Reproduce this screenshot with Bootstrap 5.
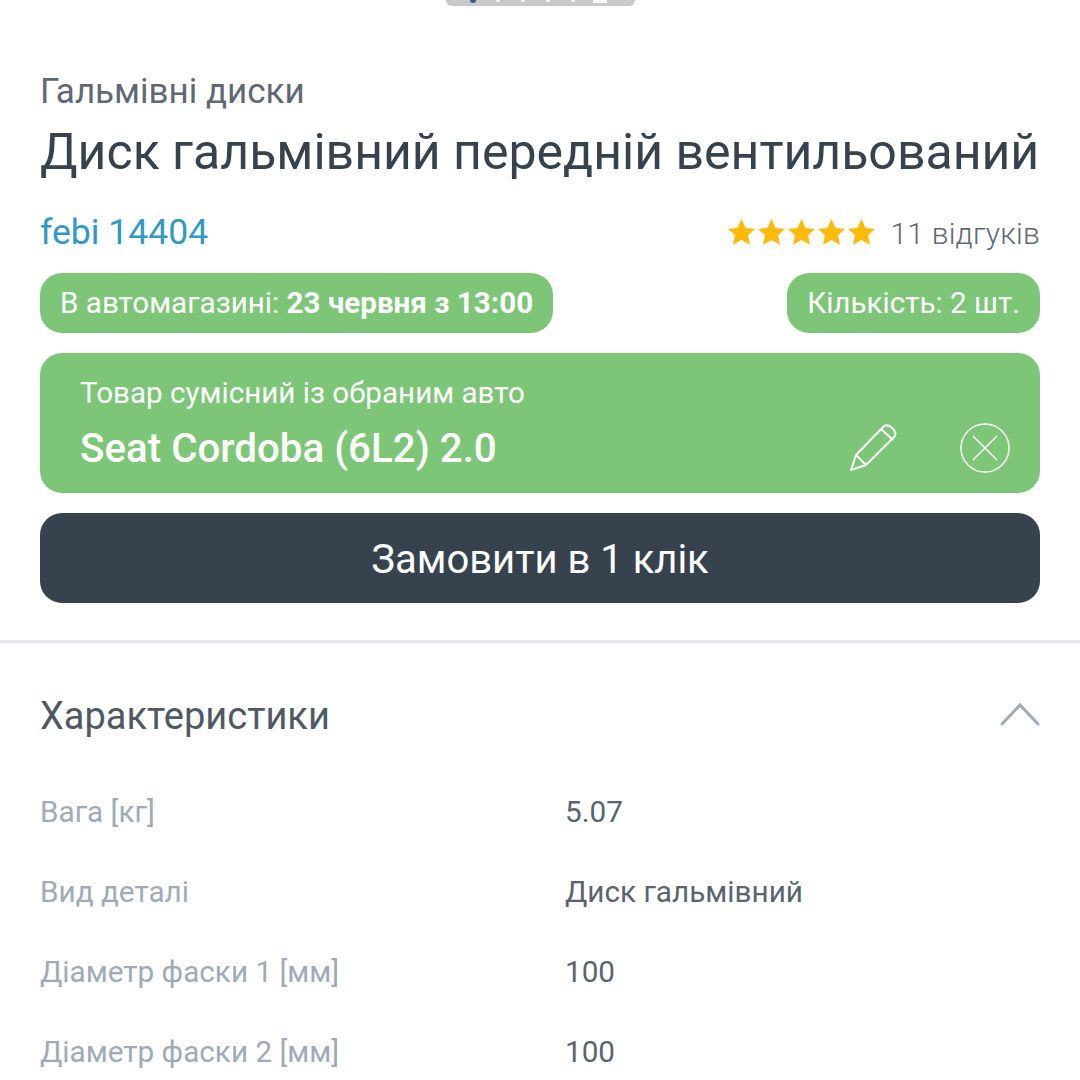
<!DOCTYPE html>
<html lang="uk">

<head>
    <meta charset="UTF-8">
    <meta name="viewport" content="width=device-width, initial-scale=1.0">
    <title>Диск гальмівний передній вентильований</title>
    <link href="https://cdn.jsdelivr.net/npm/bootstrap@5.3.0/dist/css/bootstrap.min.css" rel="stylesheet">
    <style>
        html, body {
            height: 1080px;
            overflow: hidden;
        }

        body {
            background-color: #fff;
            font-family: Roboto, "Liberation Sans", sans-serif;
            color: #37424f;
        }

        .top-handle {
            position: absolute;
            top: 0;
            left: 446px;
            width: 189px;
            height: 6px;
            background: #c8c8c8;
            border-radius: 0 0 8px 8px;
        }

        .top-handle svg {
            display: block;
        }

        .product-head {
            padding: 71px 40px 37px;
            border-bottom: 3px solid #e6e8ee;
        }

        .category-name {
            font-size: 35px;
            line-height: 42px;
            color: #5f6873;
        }

        .product-title {
            font-size: 50px;
            line-height: 60px;
            font-weight: 400;
            margin: 9px 0 0;
            white-space: nowrap;
        }

        .brand-row {
            margin-top: 29px;
            height: 44px;
        }

        .brand-link {
            font-size: 35.6px;
            color: #3398c4;
            text-decoration: none;
        }

        .review-count {
            font-size: 30px;
            font-weight: 300;
            color: #5f6873;
            letter-spacing: .2px;
            margin-left: 15px;
        }

        .status-row {
            margin-top: 18px;
        }

        .green-pill {
            background: #7dc678;
            color: #fff;
            height: 60px;
            line-height: 60px;
            padding: 0 20px;
            border-radius: 22px;
            font-size: 29.6px;
            white-space: nowrap;
        }

        .car-box {
            background: #7dc678;
            color: #fff;
            height: 140px;
            margin-top: 20px;
            padding: 0 30px 0 40px;
            border-radius: 22px;
        }

        .car-label {
            font-size: 29.6px;
            line-height: 36px;
        }

        .car-name {
            font-size: 40.3px;
            line-height: 46px;
            font-weight: 500;
            margin-top: 15px;
        }

        .car-actions {
            gap: 62px;
            margin-bottom: 20px;
        }

        .order-btn {
            display: block;
            width: 100%;
            height: 90px;
            margin-top: 20px;
            padding-top: 10px;
            background: #37424f;
            color: #fff;
            border: 0;
            border-radius: 22px;
            font-size: 40px;
        }

        .order-btn:hover {
            background: #37424f;
            color: #fff;
        }

        .specs {
            padding: 48px 40px 0;
        }

        .specs-title {
            font-size: 38px;
            line-height: 50px;
            font-weight: 400;
            color: #4f5965;
            margin: 0;
        }

        .specs-toggle {
            margin-bottom: 5px;
        }

        .spec-list {
            margin-top: 31px;
        }

        .spec-row {
            height: 80px;
            align-items: center;
            font-size: 29.7px;
        }

        .spec-name {
            width: 525px;
            color: #a0aab8;
        }

        .spec-value {
            color: #5a6470;
        }
    </style>
</head>

<body>
    <div class="top-handle">
        <svg width="189" height="6" viewBox="0 0 189 6">
            <circle cx="27" cy="0" r="3" fill="#3f5a86"/>
            <g fill="#fff">
                <circle cx="52" cy="0" r="2"/>
                <circle cx="77" cy="0" r="2"/>
                <circle cx="102" cy="0" r="2"/>
                <circle cx="127" cy="0" r="2"/>
                <rect x="147" y="0" width="14" height="3"/>
            </g>
        </svg>
    </div>

    <div class="product-head">
        <div class="category-name">Гальмівні диски</div>
        <h1 class="product-title">Диск гальмівний передній вентильований</h1>

        <div class="brand-row d-flex justify-content-between align-items-center">
            <a class="brand-link" href="#">febi 14404</a>
            <div class="d-flex align-items-center">
                <svg width="147" height="28" viewBox="0 0 147 28" fill="#ffb907">
                    <path id="star" d="M13.5 0l4.100 8.900 9.400 1-7 6.400 2 9.500-8.500-4.900-8.500 4.900 2-9.500-7-6.400 9.400-1z"/>
                    <use href="#star" x="30"/>
                    <use href="#star" x="60"/>
                    <use href="#star" x="90"/>
                    <use href="#star" x="120"/>
                </svg>
                <span class="review-count">11 відгуків</span>
            </div>
        </div>

        <div class="status-row d-flex justify-content-between">
            <div class="green-pill">В автомагазині: <b>23 червня з 13:00</b></div>
            <div class="green-pill">Кількість: 2 шт.</div>
        </div>

        <div class="car-box d-flex justify-content-between align-items-center">
            <div>
                <div class="car-label">Товар сумісний із обраним авто</div>
                <div class="car-name">Seat Cordoba (6L2) 2.0</div>
            </div>
            <div class="car-actions d-flex align-items-center align-self-end">
                <!-- edit -->
                <svg width="50" height="50" viewBox="0 0 50 50" fill="none" stroke="#fff" stroke-width="2" stroke-linejoin="round">
                    <path d="M3 47l5-15L35 4c2-2 5-2 8 0l3 3c2 3 2 5 0 7L18 42z"/>
                    <path d="M8 32l10 10M33 6l12 11"/>
                </svg>
                <!-- close -->
                <svg width="50" height="50" viewBox="0 0 50 50" fill="none" stroke="#fff" stroke-width="1.500">
                    <circle cx="25" cy="25" r="24"/>
                    <path d="M13 13l24 24M37 13L13 37"/>
                </svg>
            </div>
        </div>

        <button class="btn order-btn" type="button">Замовити в 1 клік</button>
    </div>

    <div class="specs">
        <div class="d-flex justify-content-between align-items-center">
            <h2 class="specs-title">Характеристики</h2>
            <svg class="specs-toggle" width="40" height="24" viewBox="0 0 40 24" fill="none" stroke="#a0aab8" stroke-width="3" stroke-linecap="round">
                <path d="M2 22L20 3l18 19"/>
            </svg>
        </div>

        <div class="spec-list">
            <div class="spec-row d-flex">
                <div class="spec-name">Вага [кг]</div>
                <div class="spec-value">5.07</div>
            </div>
            <div class="spec-row d-flex">
                <div class="spec-name">Вид деталі</div>
                <div class="spec-value">Диск гальмівний</div>
            </div>
            <div class="spec-row d-flex">
                <div class="spec-name">Діаметр фаски 1 [мм]</div>
                <div class="spec-value">100</div>
            </div>
            <div class="spec-row d-flex">
                <div class="spec-name">Діаметр фаски 2 [мм]</div>
                <div class="spec-value">100</div>
            </div>
        </div>
    </div>

    <script src="https://cdn.jsdelivr.net/npm/bootstrap@5.3.0/dist/js/bootstrap.bundle.min.js"></script>
</body>

</html>
